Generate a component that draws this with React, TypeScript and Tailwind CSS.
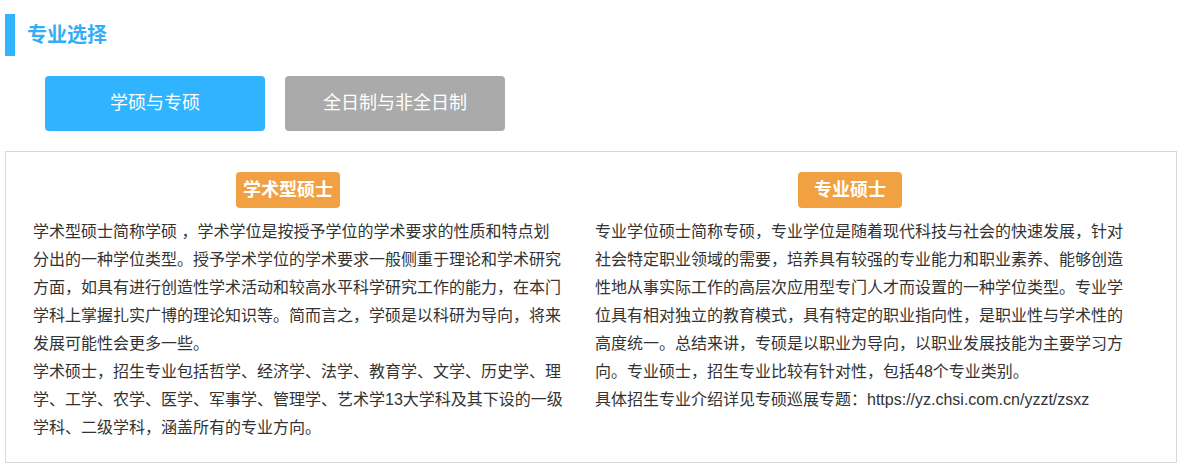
import { useState } from 'react';

const tabs = ['学硕与专硕', '全日制与非全日制'];

export default function App() {
  const [active, setActive] = useState(0);

  return (
    <div className="w-[1184px] h-[467px] bg-white text-[#333] font-['Liberation_Sans','Noto_Sans_CJK_SC',sans-serif]">
      {/* 标题 */}
      <div className="flex items-center pt-[14px] pl-[5px]">
        <div className="w-[10px] h-[42px] bg-[#30b4ff]"></div>
        <h2 className="ml-[12px] text-[20px] font-bold text-[#33adf5] leading-none">专业选择</h2>
      </div>

      {/* 切换按钮 */}
      <div className="flex gap-[20px] pl-[45px] mt-[20px]">
        {tabs.map((t, i) => (
          <button
            key={t}
            type="button"
            onClick={() => setActive(i)}
            className={`w-[220px] h-[55px] rounded-[4px] text-white text-[18px] ${
              active === i ? 'bg-[#30b4ff]' : 'bg-[#aaaaaa]'
            }`}
          >
            {t}
          </button>
        ))}
      </div>

      {/* 内容 */}
      <div className="mt-[20px] ml-[5px] w-[1172px] h-[312px] border border-[#d9d9d9] flex pl-[1px] pt-[20px]">
        <div className="w-[562px]">
          <div className="mx-auto w-[104px] h-[36px] rounded-[4px] bg-[#f1a142] text-white text-[18px] font-bold flex items-center justify-center">
            学术型硕士
          </div>
          <div className="ml-[26px] mt-[10px] w-[530px] text-[16px] leading-[28px]">
            <p>
              学术型硕士简称学硕 ，学术学位是按授予学位的学术要求的性质和特点划分出的一种学位类型。授予学术学位的学术要求一般侧重于理论和学术研究方面，如具有进行创造性学术活动和较高水平科学研究工作的能力，在本门学科上掌握扎实广博的理论知识等。简而言之，学硕是以科研为导向，将来发展可能性会更多一些。
            </p>
            <p>
              学术硕士，招生专业包括哲学、经济学、法学、教育学、文学、历史学、理学、工学、农学、医学、军事学、管理学、艺术学13大学科及其下设的一级学科、二级学科，涵盖所有的专业方向。
            </p>
          </div>
        </div>

        <div className="w-[562px]">
          <div className="mx-auto w-[104px] h-[36px] rounded-[4px] bg-[#f1a142] text-white text-[18px] font-bold flex items-center justify-center">
            专业硕士
          </div>
          <div className="ml-[26px] mt-[10px] w-[530px] text-[16px] leading-[28px]">
            <p>
              专业学位硕士简称专硕，专业学位是随着现代科技与社会的快速发展，针对社会特定职业领域的需要，培养具有较强的专业能力和职业素养、能够创造性地从事实际工作的高层次应用型专门人才而设置的一种学位类型。专业学位具有相对独立的教育模式，具有特定的职业指向性，是职业性与学术性的高度统一。总结来讲，专硕是以职业为导向，以职业发展技能为主要学习方向。专业硕士，招生专业比较有针对性，包括48个专业类别。
            </p>
            <p>具体招生专业介绍详见专硕巡展专题：https://yz.chsi.com.cn/yzzt/zsxz</p>
          </div>
        </div>
      </div>
    </div>
  );
}
